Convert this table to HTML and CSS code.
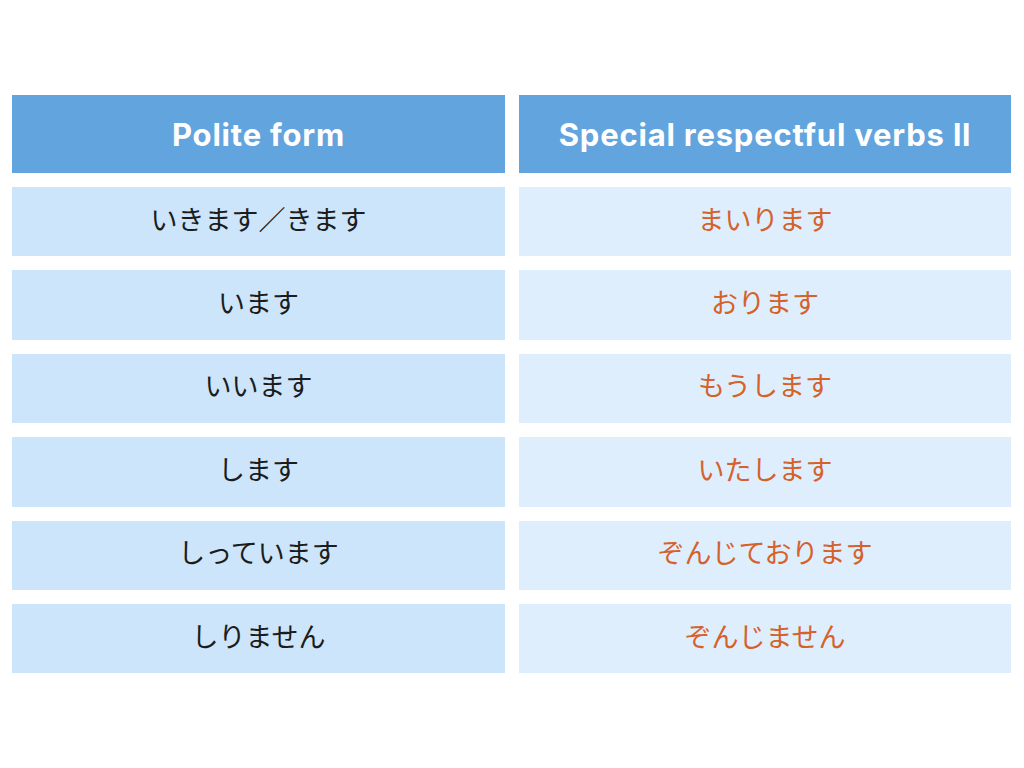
FILE: index.html
```html
<!DOCTYPE html>
<html lang="ja">
<head>
<meta charset="utf-8">
<title>Polite form / Special respectful verbs II</title>
<link rel="stylesheet" href="styles.css">
</head>
<body>
<div class="page">
  <div class="table">
    <div class="head">Polite form</div>
    <div class="head">Special respectful verbs ll</div>
    <div class="cell left">いきます／きます</div>
    <div class="cell right">まいります</div>
    <div class="cell left">います</div>
    <div class="cell right">おります</div>
    <div class="cell left">いいます</div>
    <div class="cell right">もうします</div>
    <div class="cell left">します</div>
    <div class="cell right">いたします</div>
    <div class="cell left">しっています</div>
    <div class="cell right">ぞんじております</div>
    <div class="cell left">しりません</div>
    <div class="cell right">ぞんじません</div>
  </div>
</div>
</body>
</html>
```

FILE: styles.css
```css
html, body {
  margin: 0;
  padding: 0;
  background: #ffffff;
}
.page {
  width: 1024px;
  height: 768px;
  padding: 95px 0 0 12px;
  box-sizing: border-box;
}
.table {
  display: grid;
  grid-template-columns: 493px 492px;
  grid-template-rows: 78px repeat(6, 69.4px);
  column-gap: 14px;
  row-gap: 14px;
}
.head {
  background: #62a4de;
  color: #ffffff;
  font-family: Inter, "Noto Sans", sans-serif;
  font-weight: 700;
  font-size: 31px;
  letter-spacing: 0.8px;
  display: flex;
  align-items: center;
  justify-content: center;
}
.cell {
  display: flex;
  align-items: center;
  justify-content: center;
  padding-bottom: 7px;
  box-sizing: border-box;
  font-family: "Noto Sans CJK JP", sans-serif;
  font-size: 27px;
}
.left {
  background: #cde5fa;
  color: #1c1c1c;
}
.right {
  background: #deeefc;
  color: #d5612b;
}
```
